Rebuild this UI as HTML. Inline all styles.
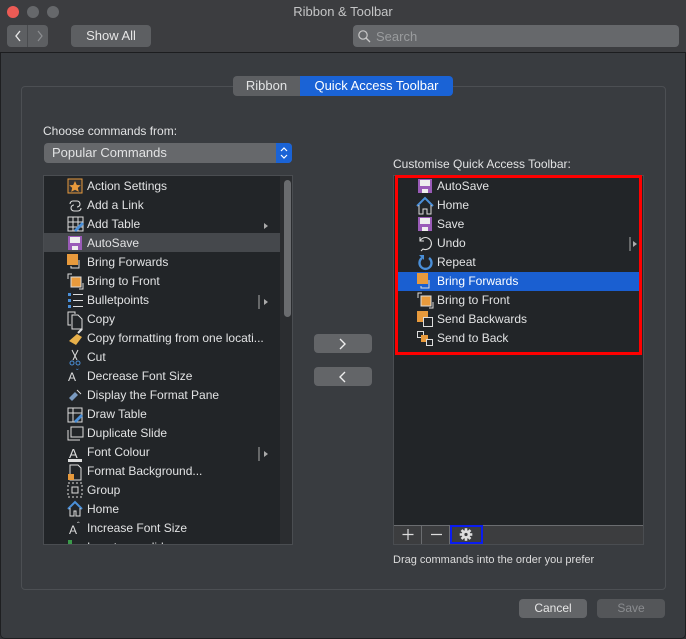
<!DOCTYPE html>
<html><head><meta charset="utf-8"><style>
*{box-sizing:border-box;margin:0;padding:0}
body{width:686px;height:639px;background:#323438;font-family:"Liberation Sans",sans-serif;font-size:12px;color:#e2e3e4;position:relative;overflow:hidden}
.abs{position:absolute}
.win{left:0;top:0;width:686px;height:639px;background:#393c40;border-radius:5px;border:1px solid #1e1f21}
.titlebar{left:0;top:0;width:686px;height:53px;background:#3c3d40;border-bottom:1px solid #1c1d1f}
.dot{width:12px;height:12px;border-radius:50%;top:6px}
.btn{background:#636568;border-radius:4px;color:#e6e6e6;text-align:center}
.panel{left:21px;top:86px;width:645px;height:504px;border:1px solid #4c4f53;border-radius:4px;background:#393c40}
.list{background:#222528;border:1px solid #4a4d51;overflow:hidden}
.row{position:absolute;left:0;height:19px;line-height:19px;white-space:nowrap;font-size:12px}
.ic{position:absolute;top:2px;width:15px;height:15px}
.sq{position:absolute;background:#e89a3c}
.ol{position:absolute;border:1px solid #ddd}
</style></head><body>
<div class="abs win"></div>
<div class="abs titlebar"></div>
<div class="abs dot" style="left:7px;background:#ec5b55"></div>
<div class="abs dot" style="left:27px;background:#66686b"></div>
<div class="abs dot" style="left:47px;background:#66686b"></div>
<div class="abs" style="left:0;width:686px;top:4px;text-align:center;font-size:13px;color:#c4c5c6">Ribbon &amp; Toolbar</div>
<div class="abs btn" style="left:7px;top:25px;width:41px;height:22px;background:#5d5f62"></div>
<div class="abs" style="left:27px;top:25px;width:1px;height:22px;background:#494b4e"></div>
<svg class="abs" style="left:7px;top:25px" width="41" height="22"><path d="M13 6 L9 11 L13 16" stroke="#e5e5e5" stroke-width="1.4" fill="none"/><path d="M33 6 L37 11 L33 16" stroke="#8d8f92" stroke-width="1.2" fill="none" transform="translate(-2,0)"/></svg>
<div class="abs btn" style="left:71px;top:25px;width:80px;height:22px;line-height:22px;font-size:13px;background:#5d5f62">Show All</div>
<div class="abs" style="left:353px;top:25px;width:326px;height:22px;background:#66686b;border-radius:4px"></div>
<svg class="abs" style="left:357px;top:29px" width="14" height="14"><circle cx="6" cy="6" r="4.2" stroke="#c8c8c8" stroke-width="1.2" fill="none"/><path d="M9 9 L13 13" stroke="#c8c8c8" stroke-width="1.3"/></svg>
<div class="abs" style="left:376px;top:29px;font-size:13px;color:#9a9c9e">Search</div>

<div class="abs panel"></div>
<div class="abs" style="left:233px;top:76px;width:67px;height:20px;background:#5d5f62;border-radius:4px 0 0 4px;text-align:center;line-height:20px;font-size:13px">Ribbon</div>
<div class="abs" style="left:300px;top:76px;width:153px;height:20px;background:#1a63d6;border-radius:0 4px 4px 0;text-align:center;line-height:20px;font-size:13px;color:#fff">Quick Access Toolbar</div>

<div class="abs" style="left:43px;top:124px;font-size:12px">Choose commands from:</div>
<div class="abs" style="left:44px;top:143px;width:248px;height:20px;background:#66686b;border-radius:4px;line-height:20px;padding-left:8px;font-size:13px">Popular Commands</div>
<div class="abs" style="left:276px;top:143px;width:16px;height:20px;background:#1a63d6;border-radius:0 4px 4px 0"></div>
<svg class="abs" style="left:276px;top:143px" width="16" height="20"><path d="M5 8 L8 5 L11 8 M5 12 L8 15 L11 12" stroke="#fff" stroke-width="1.2" fill="none"/></svg>

<!-- left list -->
<div class="abs list" style="left:43px;top:175px;width:250px;height:370px">
 <div class="abs" style="left:236px;top:0;width:13px;height:369px;background:#2b2d30"></div>
 <div class="abs" style="left:240px;top:4px;width:7px;height:137px;background:#6a6c6f;border-radius:4px"></div>
 <div class="abs" style="left:0;top:57px;width:236px;height:19px;background:#45484c"></div>
 <div style="position:absolute;left:0;top:0;width:236px">
  <div class="row" style="top:1px;left:43px">Action Settings</div>
  <div class="row" style="top:20px;left:43px">Add a Link</div>
  <div class="row" style="top:39px;left:43px">Add Table</div>
  <div class="row" style="top:58px;left:43px">AutoSave</div>
  <div class="row" style="top:77px;left:43px">Bring Forwards</div>
  <div class="row" style="top:96px;left:43px">Bring to Front</div>
  <div class="row" style="top:115px;left:43px">Bulletpoints</div>
  <div class="row" style="top:134px;left:43px">Copy</div>
  <div class="row" style="top:153px;left:43px">Copy formatting from one locati...</div>
  <div class="row" style="top:172px;left:43px">Cut</div>
  <div class="row" style="top:191px;left:43px">Decrease Font Size</div>
  <div class="row" style="top:210px;left:43px">Display the Format Pane</div>
  <div class="row" style="top:229px;left:43px">Draw Table</div>
  <div class="row" style="top:248px;left:43px">Duplicate Slide</div>
  <div class="row" style="top:267px;left:43px">Font Colour</div>
  <div class="row" style="top:286px;left:43px">Format Background...</div>
  <div class="row" style="top:305px;left:43px">Group</div>
  <div class="row" style="top:324px;left:43px">Home</div>
  <div class="row" style="top:343px;left:43px">Increase Font Size</div>
  <div class="row" style="top:362px;left:43px">Insert new slide</div>
 </div>
 <svg class="abs" style="left:0;top:0" width="236" height="370">
  <!-- arrows -->
  <path d="M220 47 l4 3 l-4 3z M220 123 l4 3 l-4 3z M220 275 l4 3 l-4 3z" fill="#aaa"/>
  <path d="M215 119 v14 M215 271 v14" stroke="#aaa"/>
  <!-- action settings -->
  <rect x="24" y="3" width="14" height="14" fill="#333" stroke="#e89a3c"/><path d="M31 5 l1.8 4 4 .3 -3 2.6 1 4 -3.8-2.2 -3.8 2.2 1-4 -3-2.6 4-.3z" fill="#e89a3c"/>
  <!-- link -->
  <path d="M26 28 a3 3 0 0 1 3-3 h4 a3 3 0 0 1 0 6 M37 32 a3 3 0 0 1-3 3 h-4 a3 3 0 0 1 0-6" stroke="#ddd" fill="none" stroke-width="1.1"/>
  <!-- table -->
  <path d="M24 41h15v14h-15z M24 46h15 M24 51h15 M29 41v14 M34 41v14" stroke="#ddd" fill="none"/><path d="M30 54 l8-8 2 2 -8 8z" fill="#4a8fd8"/>
  <!-- autosave -->
  <rect x="24" y="60" width="14" height="14" fill="#9a5bb8"/><rect x="26" y="61" width="10" height="6" fill="#eee"/><rect x="28" y="70" width="6" height="4" fill="#eee"/>
  <!-- bring forwards -->
  <rect x="23" y="78" width="11" height="11" fill="#e89a3c"/><path d="M35 84 v8 h-8 v-2" stroke="#ddd" fill="none"/><path d="M35 84 h0" stroke="#ddd"/>
  <!-- bring to front -->
  <path d="M24 103 v-5 h4 M39 107 v6 h-4" stroke="#ddd" fill="none"/><rect x="27" y="101" width="10" height="10" fill="#e89a3c" stroke="#ddd"/>
  <!-- bullets -->
  <rect x="24" y="117" width="3" height="3" fill="#4a8fd8"/><rect x="24" y="123" width="3" height="3" fill="#4a8fd8"/><rect x="24" y="129" width="3" height="3" fill="#4a8fd8"/><path d="M29 118.5h10 M29 124.5h10 M29 130.5h10" stroke="#ddd"/>
  <!-- copy -->
  <path d="M27 149 h-3 v-13 h7 l0 2 M28 139 h6 l4 4 v10 h-10z" stroke="#ddd" fill="none"/>
  <!-- brush -->
  <path d="M25 165 l8-7 5 3 -6 8z" fill="#e8b04a"/><path d="M34 157 l4-4" stroke="#ddd" stroke-width="2"/>
  <!-- cut -->
  <path d="M28 174 l5 10 M34 174 l-5 10" stroke="#ddd"/><circle cx="28" cy="187" r="2" stroke="#4a8fd8" fill="none"/><circle cx="34" cy="187" r="2" stroke="#4a8fd8" fill="none"/>
  <text x="24" y="205" fill="#ddd" font-size="12" font-family="Liberation Sans">A</text><text x="32" y="199" fill="#4a8fd8" font-size="8">ˇ</text>
  <path d="M25 222 l6-6 3 3 -6 6z" fill="#7a9ac0"/><path d="M33 214 l4 4" stroke="#ddd"/>
  <path d="M24 232h14v14h-14z M24 237h14 M29 232v14" stroke="#ddd" fill="none"/><path d="M30 245 l7-7 2 2 -7 7z" fill="#4a8fd8"/>
  <path d="M27 251h12v10h-12z M24 254v10h12" stroke="#ddd" fill="none"/>
  <text x="25" y="282" fill="#ddd" font-size="13">A</text><rect x="24" y="283" width="14" height="3" fill="#ddd"/>
  <path d="M26 289h8l3 3v12h-11z" stroke="#ddd" fill="none"/><rect x="24" y="298" width="6" height="6" fill="#e89a3c"/>
  <path d="M24 307h14v14h-14z" stroke="#ddd" fill="none" stroke-dasharray="2 2"/><rect x="28" y="311" width="6" height="6" stroke="#ddd" fill="none"/>
  <path d="M24 333 l7-7 7 7" stroke="#4a8fd8" stroke-width="2" fill="none"/><path d="M26 332v8h4v-5h2v5h4v-8" stroke="#ddd" fill="none"/>
  <text x="25" y="358" fill="#ddd" font-size="12">A</text><text x="33" y="352" fill="#ddd" font-size="8">ˆ</text>
  <rect x="24" y="364" width="4" height="4" fill="#3a9a4a"/>
 </svg>
</div>

<!-- arrow buttons -->
<div class="abs btn" style="left:314px;top:334px;width:58px;height:19px"></div>
<div class="abs btn" style="left:314px;top:367px;width:58px;height:19px"></div>
<svg class="abs" style="left:314px;top:334px" width="58" height="53"><path d="M26 5 L31 10 L26 15" stroke="#eee" stroke-width="1.4" fill="none"/><path d="M31 38 L26 43 L31 48" stroke="#eee" stroke-width="1.4" fill="none"/></svg>

<div class="abs" style="left:393px;top:157px;font-size:12px">Customise Quick Access Toolbar:</div>
<div class="abs list" style="left:393px;top:175px;width:251px;height:370px;background:#222528">
 <div class="abs" style="left:1px;top:96px;width:246px;height:19px;background:#1a5fd1"></div>
 <div class="abs" style="left:0;top:349px;width:249px;height:19px;background:#3c3d3f;border-top:1px solid #6b6d70"></div>
 <div class="abs" style="left:27px;top:349px;width:1px;height:19px;background:#6b6d70"></div>
 <div class="abs" style="left:55px;top:349px;width:1px;height:19px;background:#6b6d70"></div>
 <div class="abs" style="left:56px;top:349px;width:33px;height:19px;border:2px solid #0a1cf0"></div>
 <svg class="abs" style="left:0;top:349px" width="100" height="19"><path d="M14 4v11 M8.5 9.5h11 M37 9.5h11" stroke="#ddd" stroke-width="1.2"/>
  <g transform="translate(72,9.5)" fill="#ddd"><circle r="4.2"/><g id="t"><rect x="-1.3" y="-6.3" width="2.6" height="12.6"/></g><rect x="-1.3" y="-6.3" width="2.6" height="12.6" transform="rotate(45)"/><rect x="-1.3" y="-6.3" width="2.6" height="12.6" transform="rotate(90)"/><rect x="-1.3" y="-6.3" width="2.6" height="12.6" transform="rotate(135)"/><circle r="1.6" fill="#3c3d3f"/></g></svg>
 <div style="position:absolute;left:0;top:0">
  <div class="row" style="top:1px;left:43px">AutoSave</div>
  <div class="row" style="top:20px;left:43px">Home</div>
  <div class="row" style="top:39px;left:43px">Save</div>
  <div class="row" style="top:58px;left:43px">Undo</div>
  <div class="row" style="top:77px;left:43px">Repeat</div>
  <div class="row" style="top:96px;left:43px;color:#fff">Bring Forwards</div>
  <div class="row" style="top:115px;left:43px">Bring to Front</div>
  <div class="row" style="top:134px;left:43px">Send Backwards</div>
  <div class="row" style="top:153px;left:43px">Send to Back</div>
 </div>
 <svg class="abs" style="left:0;top:0" width="250" height="200">
  <rect x="24" y="3" width="14" height="14" fill="#9a5bb8"/><rect x="26" y="4" width="10" height="6" fill="#eee"/><rect x="28" y="13" width="6" height="4" fill="#eee"/>
  <path d="M23 30 l8-8 8 8" stroke="#4a8fd8" stroke-width="2" fill="none"/><path d="M25 29v9h4v-5h4v5h4v-9" stroke="#ddd" fill="none"/>
  <rect x="24" y="41" width="14" height="14" fill="#9a5bb8"/><rect x="26" y="42" width="10" height="6" fill="#eee"/><rect x="28" y="51" width="6" height="4" fill="#eee"/>
  <path d="M26 61 v4 h4 M26 65 a6 6 0 1 1 3 8 l-2 2" stroke="#ddd" fill="none" stroke-width="1.1"/>
  <path d="M236 61 v14" stroke="#aaa"/><path d="M239 65 l4 3 -4 3z" fill="#aaa"/>
  <path d="M35 82 a6 6 0 1 1 -7 0" stroke="#4a8fd8" stroke-width="2.4" fill="none"/><path d="M25 79 h5 v5z" fill="#4a8fd8"/>
  <rect x="23" y="97" width="11" height="11" fill="#e89a3c"/><path d="M35 104 v8 h-8 v-2" stroke="#ddd" fill="none"/>
  <path d="M24 122 v-5 h4 M39 126 v6 h-4" stroke="#ddd" fill="none"/><rect x="27" y="120" width="10" height="10" fill="#e89a3c" stroke="#ddd"/>
  <rect x="23" y="135" width="11" height="11" fill="#e89a3c"/><rect x="29.5" y="141.5" width="9" height="9" fill="#222528" stroke="#ddd"/>
  <rect x="23.5" y="155.5" width="6" height="6" stroke="#ddd" fill="none"/><rect x="27" y="159" width="7" height="7" fill="#e89a3c"/><rect x="32.5" y="163.5" width="6" height="6" stroke="#ddd" fill="#222528"/>
 </svg>
</div>
<div class="abs" style="left:395px;top:175px;width:247px;height:180px;border:3px solid #fe0000"></div>
<div class="abs" style="left:393px;top:554px;font-size:11px;color:#dcdcdc">Drag commands into the order you prefer</div>

<div class="abs btn" style="left:519px;top:599px;width:68px;height:19px;line-height:19px;font-size:12px">Cancel</div>
<div class="abs btn" style="left:597px;top:599px;width:68px;height:19px;line-height:19px;font-size:12px;background:#545659;color:#8a8c8f">Save</div>
</body></html>
